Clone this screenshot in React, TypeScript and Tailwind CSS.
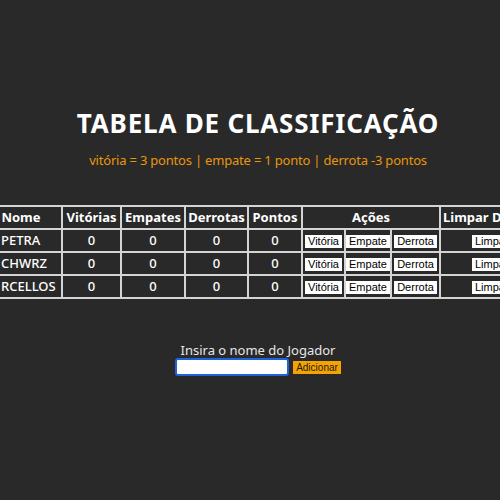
import React from "react";

const players = ["PETRA", "CHWRZ", "RCELLOS"];

const cell = "border-2 border-[#d4d4d4] h-[23px] p-0";
const btn =
  "bg-white text-black text-[11px] leading-[13px] px-[3px] font-normal font-['Liberation_Sans',sans-serif]";

export default function App() {
  return (
    <div className="w-[500px] h-[500px] overflow-hidden bg-[#292929] flex flex-col items-center font-['Noto_Sans',sans-serif] text-white">
      <h1 className="ml-[16px] mt-[107px] text-[26px] leading-[32px] font-bold tracking-[0.8px]">
        TABELA DE CLASSIFICAÇÃO
      </h1>
      <p className="ml-[16px] mt-[11px] text-[13px] leading-[20px] text-[#e8960c] tracking-[-0.2px]">
        vitória = 3 pontos | empate = 1 ponto | derrota -3 pontos
      </p>
      <div className="mt-[35px] w-full flex justify-center">
        <table className="shrink-0 w-[540px] min-w-[540px] table-fixed border-collapse text-[13px] font-semibold">
          <colgroup>
            <col className="w-[82px]" />
            <col className="w-[59px]" />
            <col className="w-[64px]" />
            <col className="w-[63px]" />
            <col className="w-[54px]" />
            <col className="w-[43px]" />
            <col className="w-[46px]" />
            <col className="w-[49px]" />
            <col className="w-[80px]" />
          </colgroup>
          <thead>
            <tr>
              <th className={`${cell} font-bold text-center`}>Nome</th>
              <th className={`${cell} font-bold`}>Vitórias</th>
              <th className={`${cell} font-bold`}>Empates</th>
              <th className={`${cell} font-bold`}>Derrotas</th>
              <th className={`${cell} font-bold`}>Pontos</th>
              <th className={`${cell} font-bold`} colSpan={3}>
                Ações
              </th>
              <th className={`${cell} font-bold text-left pl-[2px] whitespace-nowrap overflow-hidden`}>
                Limpar Dados
              </th>
            </tr>
          </thead>
          <tbody>
            {players.map((p) => (
              <tr key={p}>
                <td className={`${cell} text-left pl-[20px] font-medium whitespace-nowrap`}>
                  {p}
                </td>
                <td className={`${cell} text-center font-medium`}>0</td>
                <td className={`${cell} text-center font-medium`}>0</td>
                <td className={`${cell} text-center font-medium`}>0</td>
                <td className={`${cell} text-center font-medium`}>0</td>
                <td className={`${cell} text-center`}>
                  <button className={btn}>Vitória</button>
                </td>
                <td className={`${cell} text-center`}>
                  <button className={btn}>Empate</button>
                </td>
                <td className={`${cell} text-center`}>
                  <button className={btn}>Derrota</button>
                </td>
                <td className={`${cell} text-left pl-[31px]`}>
                  <button className={btn}>Limpar</button>
                </td>
              </tr>
            ))}
          </tbody>
        </table>
      </div>
      <label className="ml-[16px] mt-[42px] text-[13px] leading-[18px] text-[#e6e6e6] tracking-[0px]">
        Insira o nome do Jogador
      </label>
      <div className="ml-[16px] flex items-center gap-[4px] mt-[-1px]">
        <input
          className="w-[114px] h-[18px] bg-white border-2 border-[#1e63d8] rounded-[3px] outline-none"
          type="text"
        />
        <button className="bg-[#f5a300] text-[#1a1a1a] text-[10px] leading-[13px] px-[3px] font-['Liberation_Sans',sans-serif]">
          Adicionar
        </button>
      </div>
    </div>
  );
}
